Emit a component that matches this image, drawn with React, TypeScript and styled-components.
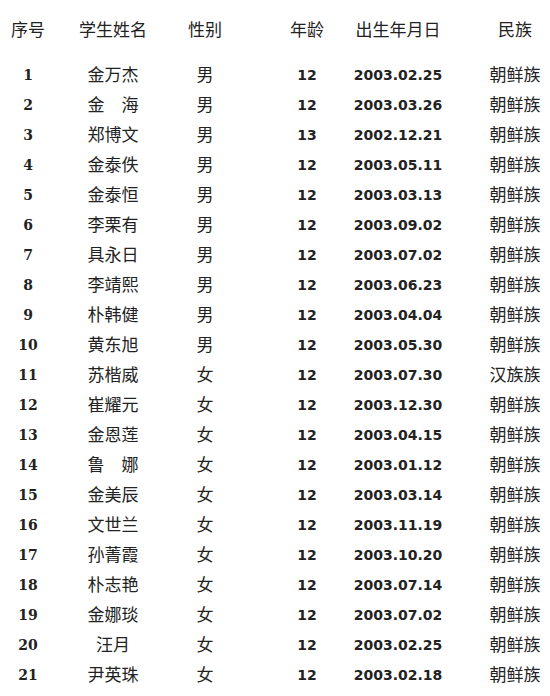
import styled, { createGlobalStyle } from 'styled-components';

const GlobalStyle = createGlobalStyle`
  html, body {
    margin: 0;
    padding: 0;
    background: #ffffff;
  }
  body {
    font-family: 'DejaVu Sans', 'Noto Sans CJK SC', sans-serif;
    color: #222222;
  }
`;

type Student = {
  id: number;
  name: string;
  gender: string;
  age: number;
  birth: string;
  nation: string;
};

const students: Student[] = [
  { id: 1, name: '金万杰', gender: '男', age: 12, birth: '2003.02.25', nation: '朝鲜族' },
  { id: 2, name: '金　海', gender: '男', age: 12, birth: '2003.03.26', nation: '朝鲜族' },
  { id: 3, name: '郑博文', gender: '男', age: 13, birth: '2002.12.21', nation: '朝鲜族' },
  { id: 4, name: '金泰佚', gender: '男', age: 12, birth: '2003.05.11', nation: '朝鲜族' },
  { id: 5, name: '金泰恒', gender: '男', age: 12, birth: '2003.03.13', nation: '朝鲜族' },
  { id: 6, name: '李栗有', gender: '男', age: 12, birth: '2003.09.02', nation: '朝鲜族' },
  { id: 7, name: '具永日', gender: '男', age: 12, birth: '2003.07.02', nation: '朝鲜族' },
  { id: 8, name: '李靖熙', gender: '男', age: 12, birth: '2003.06.23', nation: '朝鲜族' },
  { id: 9, name: '朴韩健', gender: '男', age: 12, birth: '2003.04.04', nation: '朝鲜族' },
  { id: 10, name: '黄东旭', gender: '男', age: 12, birth: '2003.05.30', nation: '朝鲜族' },
  { id: 11, name: '苏楷威', gender: '女', age: 12, birth: '2003.07.30', nation: '汉族族' },
  { id: 12, name: '崔耀元', gender: '女', age: 12, birth: '2003.12.30', nation: '朝鲜族' },
  { id: 13, name: '金恩莲', gender: '女', age: 12, birth: '2003.04.15', nation: '朝鲜族' },
  { id: 14, name: '鲁　娜', gender: '女', age: 12, birth: '2003.01.12', nation: '朝鲜族' },
  { id: 15, name: '金美辰', gender: '女', age: 12, birth: '2003.03.14', nation: '朝鲜族' },
  { id: 16, name: '文世兰', gender: '女', age: 12, birth: '2003.11.19', nation: '朝鲜族' },
  { id: 17, name: '孙菁霞', gender: '女', age: 12, birth: '2003.10.20', nation: '朝鲜族' },
  { id: 18, name: '朴志艳', gender: '女', age: 12, birth: '2003.07.14', nation: '朝鲜族' },
  { id: 19, name: '金娜琰', gender: '女', age: 12, birth: '2003.07.02', nation: '朝鲜族' },
  { id: 20, name: '汪月', gender: '女', age: 12, birth: '2003.02.25', nation: '朝鲜族' },
  { id: 21, name: '尹英珠', gender: '女', age: 12, birth: '2003.02.18', nation: '朝鲜族' },
];

// 6 columns; two of them are nudged right so their text centers match the sheet
const Table = styled.div`
  display: grid;
  grid-template-columns: 56px 114px 70px 112px 92px 106px;
  grid-template-rows: 60px;
  grid-auto-rows: 30px;
  width: 550px;
`;

const HeadCell = styled.div<{ $indent?: number }>`
  display: flex;
  align-items: center;
  justify-content: center;
  padding-left: ${(p) => p.$indent ?? 0}px;
  padding-bottom: 3px;
  font-family: 'Noto Sans CJK SC', sans-serif;
  font-size: 17px;
  font-weight: 400;
  white-space: nowrap;
`;

type Kind = 'serif' | 'num' | 'text';

const fonts: Record<Kind, string> = {
  serif: "'DejaVu Serif', serif",
  num: "'DejaVu Sans', sans-serif",
  text: "'Noto Sans CJK SC', sans-serif",
};

const Cell = styled.div<{ $indent?: number; $kind?: Kind }>`
  display: flex;
  align-items: center;
  justify-content: center;
  padding-left: ${(p) => p.$indent ?? 0}px;
  padding-bottom: ${(p) => ((p.$kind ?? 'text') === 'text' ? '3px' : '0')};
  font-family: ${(p) => fonts[p.$kind ?? 'text']};
  font-size: ${(p) => ((p.$kind ?? 'text') === 'text' ? '17px' : '14px')};
  font-weight: ${(p) => ((p.$kind ?? 'text') === 'text' ? 400 : 700)};
  white-space: nowrap;
`;

const headers = ['序号', '学生姓名', '性别', '年龄', '出生年月日', '民族'];
const indents = [0, 0, 0, 22, 0, 36];

const App = () => {
  return (
    <>
      <GlobalStyle />
      <Table>
        {headers.map((h, i) => (
          <HeadCell key={h} $indent={indents[i]}>
            {h}
          </HeadCell>
        ))}
        {students.map((s) => [
          <Cell key={s.id + '-id'} $kind="serif">{s.id}</Cell>,
          <Cell key={s.id + '-name'}>{s.name}</Cell>,
          <Cell key={s.id + '-gender'}>{s.gender}</Cell>,
          <Cell key={s.id + '-age'} $kind="num" $indent={indents[3]}>
            {s.age}
          </Cell>,
          <Cell key={s.id + '-birth'} $kind="num">{s.birth}</Cell>,
          <Cell key={s.id + '-nation'} $indent={indents[5]}>
            {s.nation}
          </Cell>,
        ])}
      </Table>
    </>
  );
};

export default App;
